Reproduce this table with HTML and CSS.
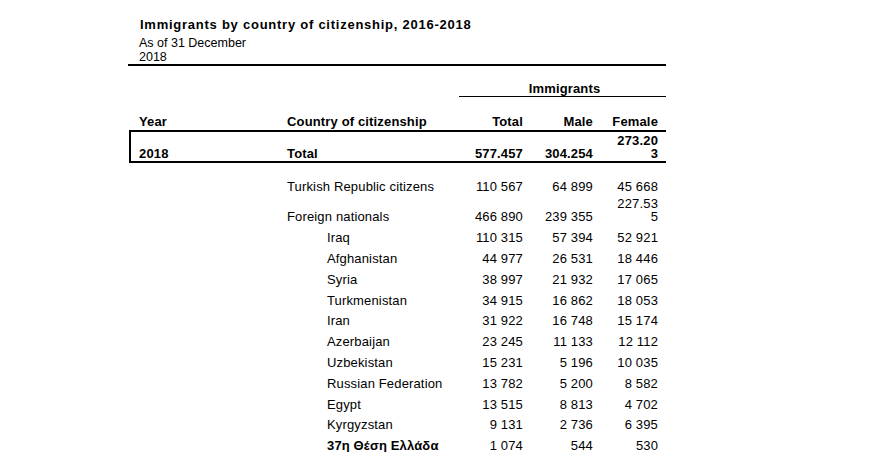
FILE: index.html
```html
<!DOCTYPE html>
<html lang="en">
<head>
<meta charset="utf-8">
<title>Immigrants by country of citizenship, 2016-2018</title>
<link rel="stylesheet" href="styles.css">
</head>
<body>
<div class="report">
  <div class="head">
    <div class="title">Immigrants by country of citizenship, 2016-2018</div>
    <div class="sub">As of 31 December</div>
    <div class="sub">2018</div>
  </div>
  <table class="data">
    <colgroup>
      <col class="c1"><col class="c2"><col class="c3"><col class="c4"><col class="c5">
    </colgroup>
    <thead>
      <tr class="group">
        <th></th><th></th><th colspan="3" class="imm"><span>Immigrants</span></th>
      </tr>
      <tr class="cols">
        <th class="y">Year</th><th class="n">Country of citizenship</th><th class="num">Total</th><th class="num">Male</th><th class="num fh">Female</th>
      </tr>
    </thead>
    <tbody>
      <tr class="total">
        <td class="y">2018</td><td class="n">Total</td><td class="num">577.457</td><td class="num">304.254</td><td class="num f">273.203</td>
      </tr>
      <tr class="first">
        <td class="y"></td><td class="n">Turkish Republic citizens</td><td class="num">110 567</td><td class="num">64 899</td><td class="num f">45 668</td>
      </tr>
      <tr>
        <td class="y"></td><td class="n">Foreign nationals</td><td class="num">466 890</td><td class="num">239 355</td><td class="num f">227.535</td>
      </tr>
      <tr class="gap">
        <td class="y"></td><td class="n sub-c">Iraq</td><td class="num">110 315</td><td class="num">57 394</td><td class="num f">52 921</td>
      </tr>
      <tr>
        <td class="y"></td><td class="n sub-c">Afghanistan</td><td class="num">44 977</td><td class="num">26 531</td><td class="num f">18 446</td>
      </tr>
      <tr>
        <td class="y"></td><td class="n sub-c">Syria</td><td class="num">38 997</td><td class="num">21 932</td><td class="num f">17 065</td>
      </tr>
      <tr>
        <td class="y"></td><td class="n sub-c">Turkmenistan</td><td class="num">34 915</td><td class="num">16 862</td><td class="num f">18 053</td>
      </tr>
      <tr>
        <td class="y"></td><td class="n sub-c">Iran</td><td class="num">31 922</td><td class="num">16 748</td><td class="num f">15 174</td>
      </tr>
      <tr>
        <td class="y"></td><td class="n sub-c">Azerbaijan</td><td class="num">23 245</td><td class="num">11 133</td><td class="num f">12 112</td>
      </tr>
      <tr>
        <td class="y"></td><td class="n sub-c">Uzbekistan</td><td class="num">15 231</td><td class="num">5 196</td><td class="num f">10 035</td>
      </tr>
      <tr>
        <td class="y"></td><td class="n sub-c">Russian Federation</td><td class="num">13 782</td><td class="num">5 200</td><td class="num f">8 582</td>
      </tr>
      <tr>
        <td class="y"></td><td class="n sub-c">Egypt</td><td class="num">13 515</td><td class="num">8 813</td><td class="num f">4 702</td>
      </tr>
      <tr>
        <td class="y"></td><td class="n sub-c">Kyrgyzstan</td><td class="num">9 131</td><td class="num">2 736</td><td class="num f">6 395</td>
      </tr>
      <tr>
        <td class="y"></td><td class="n sub-c strong">37η Θέση Ελλάδα</td><td class="num">1 074</td><td class="num">544</td><td class="num f">530</td>
      </tr>
    </tbody>
  </table>
</div>
</body>
</html>
```

FILE: styles.css
```css
html, body {
  margin: 0;
  padding: 0;
  background: #ffffff;
}

body {
  font-family: "Liberation Sans", Arial, sans-serif;
  font-size: 12px;
  color: #000000;
}

.report {
  margin-left: 128px;
  width: 538px;
  padding-top: 17px;
}

.head {
  border-bottom: 2px solid #000000;
}

.title {
  font-weight: bold;
  font-size: 13px;
  line-height: 16px;
  letter-spacing: 0.75px;
  padding-left: 12px;
  margin-bottom: 3px;
}

.sub {
  font-size: 12.5px;
  line-height: 14px;
  padding-left: 11px;
}

.data {
  margin-left: 1px;
  width: 537px;
  table-layout: fixed;
  border-spacing: 0;
}

.c1 { width: 158px; }
.c2 { width: 172px; }
.c3 { width: 64px; }
.c4 { width: 70px; }
.c5 { width: 73px; }

.data th,
.data td {
  box-sizing: border-box;
  padding: 0;
  font-size: 13px;
  letter-spacing: 0.15px;
  vertical-align: bottom;
  white-space: nowrap;
}

.data th {
  font-weight: bold;
  line-height: 14px;
}

.data .y {
  padding-left: 8px;
  text-align: left;
  border-left: 2px solid transparent;
}

.data .n {
  text-align: left;
}

.data .num {
  text-align: right;
}

.data .f, .data .fh {
  padding-right: 8px;
}

.group th {
  padding-top: 16px;
  padding-bottom: 0;
}

.data .group .imm {
  border-bottom: 1px solid #000000;
  text-align: center;
  padding-left: 4px;
  padding-right: 0;
}

.cols th {
  padding-top: 18px;
  padding-bottom: 1px;
}

.data td {
  line-height: 13px;
  padding-top: 7.8px;
}

.data td.f {
  padding-left: 23px;
  padding-top: 4px;
  white-space: normal;
  word-break: break-all;
}

.total td {
  font-weight: bold;
  border-top: 2px solid #000000;
  border-bottom: 2px solid #000000;
  padding-top: 2px;
  padding-bottom: 1px;
}

.data .total td,
.data .total td.f {
  padding-top: 2px;
}

.data .total td.y {
  border-left: 2px solid #000000;
}

.data .first td {
  padding-top: 16.5px;
}

.data .gap td {
  padding-top: 8.8px;
}

.data .sub-c {
  padding-left: 40px;
}

.data .strong {
  font-weight: bold;
}
```
